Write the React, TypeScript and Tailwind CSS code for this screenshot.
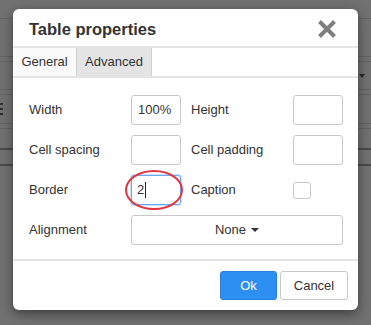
import React from 'react';

const Label: React.FC<{ children: React.ReactNode; className?: string }> = ({ children, className = '' }) => (
  <div className={`flex items-center text-[13px] text-[#333] ${className}`}>{children}</div>
);

const TextBox: React.FC<{ value?: string }> = ({ value = '' }) => (
  <div className="h-[30px] w-[50px] rounded-[3px] border border-[#c9c9c9] bg-white px-[6px] flex items-center text-[13px] text-[#333]">
    {value}
  </div>
);

export default function App() {
  return (
    <div className="relative w-[371px] h-[325px] overflow-hidden bg-[#717171] font-['Liberation_Sans',Arial,sans-serif]">
      {/* editor underneath the modal overlay */}
      <div className="flex flex-col">
        <div className="h-[18px]" />
        <div className="h-px bg-[#626262]" />
        <div className="h-[37px]" />
        <div className="h-px bg-[#626262]" />
        <div className="h-[4px]" />
        <div className="h-px bg-[#626262]" />
        <div className="h-[27px] flex items-center justify-end pr-[6px]">
          <div className="w-0 h-0 border-l-[3px] border-r-[3px] border-t-[4px] border-l-transparent border-r-transparent border-t-[#2a2a2a]" />
        </div>
        <div className="h-px bg-[#626262]" />
        <div className="h-[4px]" />
        <div className="h-px bg-[#626262]" />
        <div className="h-[28px] flex flex-col justify-center gap-[3px]">
          <div className="h-[2px] w-[3px] bg-[#2f2f2f]" />
          <div className="h-[2px] w-[3px] bg-[#2f2f2f]" />
          <div className="h-[2px] w-[3px] bg-[#2f2f2f]" />
        </div>
        <div className="h-px bg-[#626262]" />
        <div className="h-[4px]" />
        <div className="h-px bg-[#626262]" />
        <div className="h-[19px]" />
        <div className="h-[2px] bg-[#4a4a4a]" />
        <div className="h-[14px]" />
        <div className="h-[2px] bg-[#4a4a4a]" />
      </div>

      {/* dialog */}
      <div className="absolute left-[13px] top-[9px] w-[345px] h-[301px] bg-white rounded-[6px] shadow-[0_4px_12px_rgba(0,0,0,0.45)] flex flex-col">
        <div className="h-[39px] flex items-center justify-between pl-[16px] pr-[21px] border-b-2 border-[#e4e4e4]">
          <div className="text-[16.5px] font-bold text-[#333] pt-[4px]">Table properties</div>
          <svg width="20" height="20" viewBox="0 0 20 20" className="mt-[3px]">
            <path d="M2.5 2.5 L17.5 17.5 M17.5 2.5 L2.5 17.5" stroke="#7e7e7e" strokeWidth="4" strokeLinecap="butt" />
          </svg>
        </div>

        <div className="h-[30px] flex border-b-2 border-[#e4e4e4]">
          <div className="w-[63px] bg-[#fafafa] flex items-center justify-center text-[13px] text-[#333]">General</div>
          <div className="w-[76px] bg-[#e4e4e4] border-x border-[#cfcfcf] flex items-center justify-center text-[13px] text-[#333]">Advanced</div>
        </div>

        <div className="pt-[17px] pb-[14px] pl-[16px] border-b-2 border-[#e4e4e4]">
          <div className="grid grid-cols-[102px_50px_112px_50px] auto-rows-[30px] gap-y-[10px]">
            <Label>Width</Label>
            <TextBox value="100%" />
            <Label className="pl-[10px]">Height</Label>
            <TextBox />

            <Label>Cell spacing</Label>
            <TextBox />
            <Label className="pl-[10px]">Cell padding</Label>
            <TextBox />

            <Label>Border</Label>
            <div className="relative">
              <div className="h-[30px] w-[50px] rounded-[3px] border border-[#6aa9f2] shadow-[0_0_0_1px_rgba(106,169,242,0.35)] bg-white px-[5px] flex items-center text-[13px] text-[#333]">
                2<span className="ml-px w-px h-[16px] bg-[#222]" />
              </div>
              <div className="absolute left-[-6px] top-[-5px] w-[58px] h-[40px] rounded-[50%] border-[2.5px] border-[#e0353f]" />
            </div>
            <Label className="pl-[10px]">Caption</Label>
            <div className="flex items-center">
              <div className="w-[18px] h-[17px] rounded-[3px] border border-[#c9c9c9] bg-white" />
            </div>

            <Label>Alignment</Label>
            <div className="col-span-3 h-[30px] rounded-[3px] border border-[#c9c9c9] bg-white flex items-center justify-center gap-[5px] text-[13px] text-[#333]">
              None
              <span className="w-0 h-0 border-l-[4px] border-r-[4px] border-t-[4px] border-l-transparent border-r-transparent border-t-[#333]" />
            </div>
          </div>
        </div>

        <div className="flex-1 flex justify-end items-start pt-[10px] pr-[10px] gap-[3px]">
          <button className="h-[29px] w-[57px] rounded-[3px] bg-[#2e8ff2] border border-[#2a7fd8] text-white text-[13px]">Ok</button>
          <button className="h-[29px] w-[68px] rounded-[3px] bg-white border border-[#c9c9c9] text-[#333] text-[13px]">Cancel</button>
        </div>
      </div>
    </div>
  );
}
